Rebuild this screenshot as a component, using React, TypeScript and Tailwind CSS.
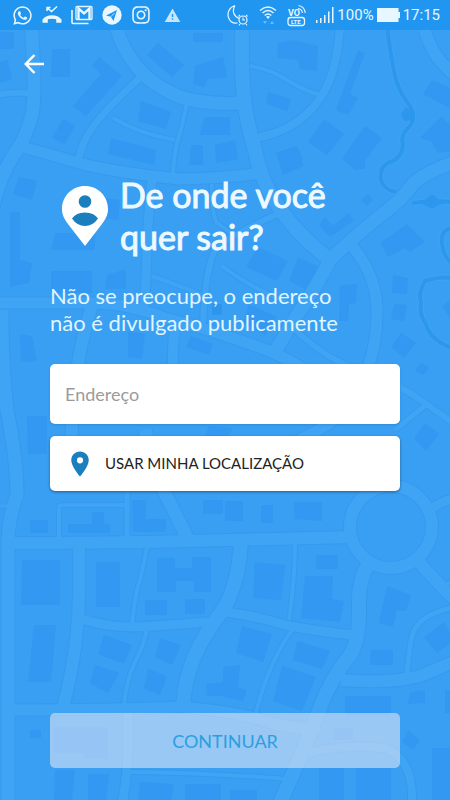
import React from 'react';
import { FaInstagram, FaWhatsapp } from 'react-icons/fa';
import { MdLocationOn, MdWarning } from 'react-icons/md';

type Road = [number, string];

const roads: Road[] = [
  [13, 'M32 -5V40Q36 90 32 115Q25 140 15 153Q0 175 -8 210'],
  [13, 'M117 -5V30Q124 52 138 68Q152 85 180 97Q205 105 242 103'],
  [14, 'M242 -5V60Q242 110 255 150Q260 180 280 209Q298 235 330 260'],
  [11, 'M18 146Q50 154 75 162Q110 172 180 179Q230 178 268 172'],
  [7, 'M141 77Q95 118 85 140Q81 148 78 162'],
  [4, 'M113 118Q140 134 175 140'],
  [4, 'M187 103Q180 135 177 143Q174 155 173 175'],
  [8, 'M340 25Q338 65 325 90Q305 128 257 138'],
  [4, 'M250 66Q270 69 287 80Q302 90 318 94'],
  [12, 'M423 20Q428 55 456 76'],
  [6, 'M-5 95Q12 92 30 93'],
  [13, 'M458 161Q425 172 413 184Q402 200 380 216Q350 240 330 260Q315 290 295 318L274 353'],
  [11, 'M350 244Q378 275 377 315Q376 370 345 410Q325 430 285 446'],
  [11, 'M-5 303H88Q125 302 165 318Q220 332 274 353Q300 365 320 380'],
  [12, 'M93 303Q82 335 77 370Q72 410 70 470'],
  [9, 'M152 178Q148 215 147 250T144 310'],
  [4, 'M152 276Q175 284 202 295'],
  [4, 'M212 184Q211 208 216 222L232 234'],
  [6, 'M280 213Q230 235 215 250Q205 270 203 325'],
  [4, 'M222 266Q248 286 290 304'],
  [6, 'M290 325Q315 350 345 365Q390 378 425 403L456 425'],
  [5, 'M395 430Q412 416 427 404'],
  [10, 'M175 325Q172 350 173 380'],
  [13, 'M2 310Q2 370 7 410Q17 460 17 495Q7 522 8 550V805'],
  [12, 'M5 543Q110 543 190 541T350 537'],
  [12, 'M391 486A41 41 0 1 1 390.9 486'],
  [9, 'M430 510Q443 500 456 499'],
  [4, 'M59 540V507Q59 505 64 505H126'],
  [5, 'M127 480V540'],
  [3, 'M0 506H14'],
  [13, 'M145 430Q157 480 170 503L189 541'],
  [12, 'M79 545Q80 600 77 630Q74 665 63 708'],
  [9, 'M82 619Q105 627 135 627Q175 625 218 621'],
  [4, 'M147 547Q142 575 137 590Q134 605 132 625'],
  [4, 'M147 628Q145 643 135 662Q126 680 124 707'],
  [14, 'M241 541Q239 580 225 607Q205 633 195 655Q184 680 183 708'],
  [11, 'M5 710Q110 710 180 707Q240 712 265 721T320 728'],
  [9, 'M226 612Q260 617 285 625Q320 632 355 635'],
  [4, 'M295 541Q295 580 289 620'],
  [4, 'M293 629Q280 645 268 675Q259 698 255 718'],
  [14, 'M369 563Q358 580 359 605Q360 640 350 655Q330 680 320 708Q302 755 279 805'],
  [12, 'M341 680Q390 684 420 676L458 660'],
  [12, 'M417 560Q430 575 456 601'],
  [5, 'M407 674Q409 650 412 636Q417 620 435 613L452 607'],
  [4, 'M440 588L455 579'],
  [9, 'M128 712V750Q127 780 122 805'],
  [4, 'M130 772Q210 773 288 779'],
  [8, 'M308 753Q350 743 384 748Q414 757 412 805'],
];

const buildings: string[] = [
  'M0 32h14v17H0z', 'M0 62l8-2 4 19-12 4z', 'M52 49h18v28H51z',
  'M158 43l26 22-12 12-25-22z', 'M92 66l7-9 23 19-36 40-13-10 28-32z',
  'M195 66l28-9 4 20-19 2-4 8-11-3z', 'M193 33h30v9h-30z',
  'M278 43l16-3 24 6-1 25-17-2-2-9-21-2z', 'M268 92l23 7-4 12-21-7z',
  'M358 50l7 3-22 60-7-4z', 'M350 94l8 4-9 16-12-3z',
  'M63 119l12 7-10 18-13-6z', 'M141 101l30 11-5 17-28-8z',
  'M111 138l45 12-2 15-46-11z', 'M204 117h26v18h-30z', 'M191 145h12v20h-14z',
  'M215 145l20-5 3 19-22 4z', 'M324 119l20 15-17 21-19-13z',
  'M365 126l17 12-25 33-15-12z', 'M276 153l20-7 8 20-21 9z',
  'M432 80l18 8v20l-27-14z', 'M441 117l9 7v27l-12 2-6-11-12-4z',
  'M19 177l18 4-5 19-19-6z', 'M10 212h10v48l12 3-3 20-19 4z',
  'M55 233h40v17H51z', 'M106 198l14 2-2 20-13-2z', 'M51 271h41v22H51z', 'M107 275l19-6v20h-21z',
  'M280 153l17-7 6 13-15 10z', 'M349 160h16v9h-12z',
  'M325 217l8 9 16-13 5 8-24 16-11-12z', 'M361 200l7-6 5 6-6 6z',
  'M380 243l27-19 18 18-15 10-5-4-17 9z', 'M258 247l30 14-11 20-31-14z',
  'M298 257l23 11-14 22-18-9z', 'M393 275l15 3-1 16-15-1z', 'M340 285l17-1-1 19-7 1-1 17h-9z',
  'M394 304l13 1-3 16-13-2z', 'M401 333l15 10-12 15-13-11z', 'M442 306l8-6v18z',
  'M20 334l12 2 5 25-16 1z', 'M128 331l17 3-3 25-14-2z', 'M191 336l22 8-4 11-23-8z',
  'M249 304l28 13-12 18-22-12z', 'M27 416h20v38H28z', 'M421 363l8 4-5 8-9-4z',
  'M425 423l14 11-13 17-12-13z', 'M209 426l24 2-8 13-20-5z',
  'M30 520h18v13H30z', 'M68 524h24v-12h12v12h6v9H68z', 'M132 500h14v19h20v13h-33z',
  'M203 500h20v14h-20z', 'M225 501h18v20h-18z', 'M261 505h12v18h-12z', 'M294 502h28v19l-28-2z',
  'M22 560h38v45H21z', 'M96 562h24v45H96z', 'M157 558h18v10h17v-11h19v35h-17v-11h-18v11h-19z',
  'M145 600h22v15h-22z', 'M185 599h20v15h-20z', 'M255 562l30 3-4 35-28-2z',
  'M316 555h22v14h-22z', 'M305 576h28l-1 23 12 2-4 21-39-4z', 'M387 586l24 9-5 16-9-1-4 17-14-4z',
  'M34 625h22l-5 57H28z', 'M104 635l28 10-8 19-26-10z', 'M95 665l24 8-11 20-18-10z',
  'M160 638l21 7-9 20-17-8z', 'M148 668l19 9-7 18-16-7z',
  'M242 626l30 8-9 28-27-9z', 'M297 641l33 10-8 18-29-9z', 'M282 666l34 11-14 34-29-10z',
  'M223 667l17-2-2 22 9 4-4 10-20-4z', 'M206 684l18-2v14h-17z',
  'M371 650h22v15h-23z', 'M424 637l20-15 10 18-17 13z',
  'M345 696h46v19h-46z', 'M410 692l15-2v13l-17 1z', 'M445 690h8v23h-8z',
  'M30 730h11v8H30z', 'M54 727h54v32H84v-6H54z', 'M335 728h18v12h-20z',
  'M408 730l12 10-7 10-11-8z', 'M432 748h20v54h-20z',
  'M55 770h20l-3 32H54z', 'M88 774h21l-3 28H88z', 'M140 782l34 2-3 18h-33z',
  'M185 784h36v18h-36z', 'M230 790h27v12h-27z', 'M319 768h25v34h-25z', 'M356 768h35v34h-35z',
];

const rivers =
  'M387 25Q390 55 396 80Q401 95 410 106Q417 118 409 127Q400 135 403 145Q402 158 390 162Q379 166 381 180Q384 190 396 192M412 203Q433 200 452 202M452 228Q440 230 442 244T452 263M452 278Q440 276 425 281Q418 293 421 303Q419 315 426 324Q430 340 452 348';

function MapBackdrop() {
  return (
    <svg
      aria-hidden="true"
      className="absolute inset-0 h-full w-full"
      viewBox="0 0 450 800"
      preserveAspectRatio="xMidYMid slice"
    >
      <rect width="450" height="800" fill="#399ff3" />
      <g fill="#3298f1">
        {buildings.map((d, i) => (
          <path key={i} d={d} />
        ))}
      </g>
      <g fill="none" stroke="#3699ee">
        {roads.map(([w, d], i) => (
          <path key={i} d={d} strokeWidth={w + 2} />
        ))}
      </g>
      <g fill="none" stroke="#3fa4f4">
        {roads.map(([w, d], i) => (
          <path key={i} d={d} strokeWidth={w} />
        ))}
      </g>
      <path d={rivers} fill="none" stroke="#3da4f4" strokeWidth="6" />
      <path d={rivers} fill="none" stroke="#2d97ee" strokeWidth="4" />
      <path d="M401 114l5-7 6 4v9l-8 1zM415 202l10-2 7-6 6 5 14 3-14 3-6 4-7-4z" fill="#2d97ee" />
      <rect x="212" y="304" width="10" height="11" rx="2" fill="#2d96ec" />
    </svg>
  );
}

function BackArrowIcon() {
  return (
    <svg width="20" height="20" viewBox="0 0 20 20" fill="none" stroke="currentColor" strokeWidth="2.500" aria-hidden="true">
      <path d="M20 10H2M10.500 1L1.700 10l8.800 9" />
    </svg>
  );
}

function MissedCallIcon() {
  return (
    <svg width="20" height="20" viewBox="0 0 20 20" aria-hidden="true">
      <path d="M5 2v4M4.500 2.500h4M5 2.500l4.500 4L15 1.500" fill="none" stroke="currentColor" strokeWidth="1.500" />
      <path d="M0.500 14.500C3 11.500 6 10.300 10 10.300s7 1.200 9.500 4.200v3.300h-5.300v-3.500c-2.700-.8-5.700-.8-8.400 0v3.500H.5z" fill="currentColor" />
    </svg>
  );
}

function MailStackIcon() {
  return (
    <svg width="22" height="20" viewBox="0 0 22 20" fill="none" stroke="currentColor" aria-hidden="true">
      <path d="M1 5v12.500q0 1 1 1h15.500" strokeWidth="1.600" />
      <rect x="5" y="1.500" width="16" height="13" rx="1" strokeWidth="1.300" />
      <path d="M7.500 14.500V3.500l5.500 5 5.500-5v11" strokeWidth="2.400" />
    </svg>
  );
}

function TelegramIcon() {
  return (
    <svg width="20" height="20" viewBox="0 0 20 20" aria-hidden="true">
      <circle cx="10" cy="10" r="9.700" fill="currentColor" />
      <path d="M4 10.500L15 5l-3.500 11-2.700-4.200z" fill="#2196f0" />
      <path d="M8.800 11.800L12.500 8" stroke="white" strokeWidth="0.700" />
    </svg>
  );
}

function MoonAlarmIcon() {
  return (
    <svg width="22" height="22" viewBox="0 0 22 22" fill="none" stroke="currentColor" aria-hidden="true">
      <path d="M8 1.500C2 3.500 0 9 1.500 13.500S7 19.500 10.500 19M8 1.500C4.500 7 7 12.500 12 14.500" strokeWidth="1.200" />
      <circle cx="16" cy="16" r="4" strokeWidth="1.200" />
      <path d="M16 13.500V16h2M11.500 12.500l1.500-1.500M20.500 12.500L19 11M13 20l-1 1.300M19 20l1 1.300" strokeWidth="1.100" />
    </svg>
  );
}

function WifiIcon() {
  return (
    <svg width="18" height="20" viewBox="0 0 18 20" fill="none" stroke="currentColor" aria-hidden="true">
      <path d="M1 5.500Q9-1.500 17 5.500M3.500 8Q9 3 14.500 8M5.700 10.500Q9 7.500 12.300 10.500" strokeWidth="1.400" />
      <path d="M7 11.800Q9 10 11 11.800L9 14z" fill="currentColor" stroke="none" />
      <path d="M4 16h4l-2 3zM11 19h4l-2-3z" fill="#67bcf8" stroke="none" />
    </svg>
  );
}

function VolteIcon() {
  return (
    <svg width="19" height="23" viewBox="0 0 19 23" fill="none" stroke="currentColor" aria-hidden="true">
      <text x="1" y="11.500" fill="currentColor" stroke="none" className="font-['Roboto',sans-serif] text-[9px] font-bold">VO</text>
      <path d="M11 4.500Q15 5 15.500 9M11.500 1.500Q17.500 2.500 18.300 9" strokeWidth="1.100" />
      <rect x="1" y="13.500" width="16.500" height="8" rx="2.500" strokeWidth="1.300" />
      <text x="4" y="20" fill="currentColor" stroke="none" className="font-['Roboto',sans-serif] text-[6px] font-bold">LTE</text>
    </svg>
  );
}

function SignalIcon() {
  return (
    <svg width="18" height="16" viewBox="0 0 18 16" fill="currentColor" aria-hidden="true">
      <path d="M0 13h1.500v3H0zM4 11h1.500v5H4zM8 8h1.500v8H8zM12 4.500h1.500V16H12zM16 0h1.500v16H16z" />
    </svg>
  );
}

function BatteryIcon() {
  return (
    <svg width="23" height="14" viewBox="0 0 23 14" fill="currentColor" aria-hidden="true">
      <path d="M0 0h21.500v4H23v6h-1.500v4H0z" />
    </svg>
  );
}

function PersonPinIcon() {
  return (
    <svg width="46" height="60" viewBox="0 0 46 60" className="shrink-0" aria-hidden="true">
      <path d="M23 0C10 0 0 10.300 0 23c0 6 2.500 10.500 6 15l17 22 17-22c3.500-4.500 6-9 6-15C46 10.300 36 0 23 0z" fill="white" />
      <circle cx="23" cy="15.500" r="6.300" fill="#1b7fbd" />
      <path d="M10 32.500Q14 26.500 23 26.500T36 32.500Q31 40 23 40T10 32.500z" fill="#1b7fbd" />
    </svg>
  );
}

function StatusBar() {
  return (
    <div className="relative flex h-[30px] items-center justify-between bg-[#2196f0] pr-[10px] pl-3 text-[#e8f7ff]">
      <div className="flex items-center gap-[9px]">
        <FaWhatsapp size={21} />
        <MissedCallIcon />
        <MailStackIcon />
        <TelegramIcon />
        <FaInstagram size={20} />
        <MdWarning size={17} className="ml-1 text-[#c5e6fc]" />
      </div>
      <div className="flex items-center gap-[3px] font-['Roboto',sans-serif] text-[15px] leading-5">
        <div className="flex items-center gap-[10px]">
          <MoonAlarmIcon />
          <WifiIcon />
          <VolteIcon />
          <SignalIcon />
        </div>
        <span>100%</span>
        <BatteryIcon />
        <span>17:15</span>
      </div>
    </div>
  );
}

export default function App() {
  return (
    <div className="relative flex min-h-screen flex-col overflow-hidden bg-[#399ff3] font-['Lato',sans-serif]">
      <MapBackdrop />
      <StatusBar />
      <header className="relative px-5 pt-5">
        <button type="button" aria-label="Voltar" className="flex h-7 w-7 items-center justify-center text-white">
          <BackArrowIcon />
        </button>
      </header>
      <main className="relative flex flex-1 flex-col px-[50px] pt-24 pb-8">
        <div className="flex items-center gap-3 pl-3">
          <PersonPinIcon />
          <h1 className="text-[34px] leading-[42px] font-normal text-[#eef9ff] [-webkit-text-stroke:1px_#eef9ff]">
            De onde você
            <br />
            quer sair?
          </h1>
        </div>
        <p className="mt-6 text-[22px] leading-[27px] text-[#e1f5ff]">
          Não se preocupe, o endereço
          <br />
          não é divulgado publicamente
        </p>
        <form className="mt-7 flex flex-1 flex-col" onSubmit={(e) => e.preventDefault()}>
          <input
            type="text"
            aria-label="Endereço"
            placeholder="Endereço"
            className="h-[60px] w-full rounded-[5px] bg-white px-[15px] text-lg text-[#333333] shadow-sm outline-none placeholder:text-[#9b9b9b]"
          />
          <button
            type="button"
            className="mt-3 flex h-[55px] w-full items-center gap-[10px] rounded-[5px] bg-white px-[15px] text-[15px] text-[#222222] shadow-[0_1px_3px_rgba(0,0,0,0.4)]"
          >
            <MdLocationOn size={30} className="text-[#1b7fbd]" />
            USAR MINHA LOCALIZAÇÃO
          </button>
          <button
            type="submit"
            className="mt-auto h-[55px] w-full rounded-[5px] bg-[#eaeaf5]/55 text-lg text-[#2ba0e0]"
          >
            CONTINUAR
          </button>
        </form>
      </main>
    </div>
  );
}
